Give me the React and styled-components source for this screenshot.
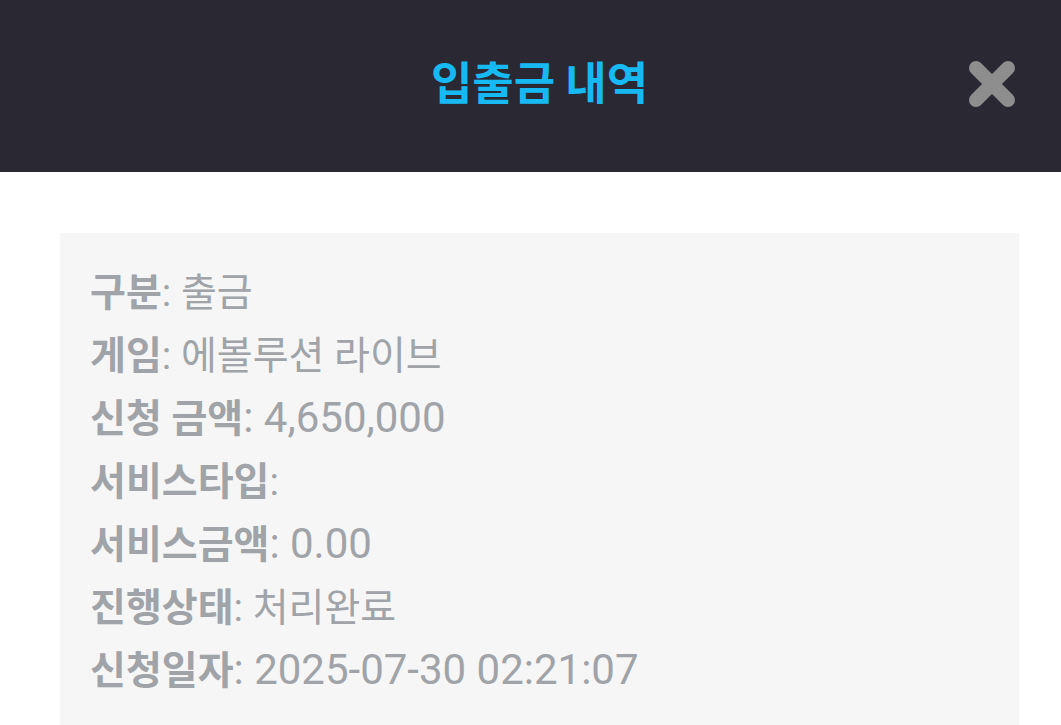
import React from "react";
import styled, { createGlobalStyle } from "styled-components";

const GlobalStyle = createGlobalStyle`
  html, body {
    margin: 0;
    padding: 0;
    background: #ffffff;
    font-family: Roboto, "Noto Sans CJK KR", sans-serif;
  }
`

const Page = styled.div`
  display: flex;
  flex-direction: column;
  min-height: 725px;
`

const Header = styled.header`
  position: relative;
  height: 172px;
  background: #292833;
  display: flex;
  align-items: center;
  justify-content: center;
`

const Title = styled.h1`
  margin: 0 0 12px 18px;
  font-size: 45px;
  font-weight: 700;
  color: #17b9f2;
  font-family: "Noto Sans CJK KR", Roboto, sans-serif;
`

const CloseButton = styled.button`
  position: absolute;
  right: 45px;
  top: 60px;
  width: 48px;
  height: 48px;
  padding: 0;
  border: 0;
  background: none;
  cursor: pointer;
`

const Card = styled.section`
  margin: 61px 42px 0 60px;
  padding: 29px 30px 40px;
  background: #f6f6f6;
  display: flex;
  flex-direction: column;
`

const Row = styled.div`
  font-size: 39px;
  line-height: 62.5px;
  color: #a0a3a8;
  white-space: nowrap;
`

const Label = styled.span`
  font-weight: 700;
`

const Value = styled.span`
  font-size: ${p => p.$numeric ? "42px" : "39px"};
`

const rows = [
    {label: "구분", value: "출금"},
    {label: "게임", value: "에볼루션 라이브"},
    {label: "신청 금액", value: "4,650,000", numeric: true},
    {label: "서비스타입", value: ""},
    {label: "서비스금액", value: "0.00", numeric: true},
    {label: "진행상태", value: "처리완료"},
    {label: "신청일자", value: "2025-07-30 02:21:07", numeric: true},
]

const App = () => {
    return (
        <Page>
            <GlobalStyle/>
            <Header>
                <Title>입출금 내역</Title>
                <CloseButton aria-label="닫기">
                    <svg width="48" height="48" viewBox="0 0 48 48">
                        <path d="M8 8 L40 40 M40 8 L8 40" stroke="#8e8e8e" strokeWidth="14" strokeLinecap="round"/>
                    </svg>
                </CloseButton>
            </Header>
            <Card>
                {rows.map(r => (
                    <Row key={r.label}>
                        <Label>{r.label}</Label>
                        <Value $numeric={r.numeric}>: {r.value}</Value>
                    </Row>
                ))}
            </Card>
        </Page>
    )
}
export default App;
